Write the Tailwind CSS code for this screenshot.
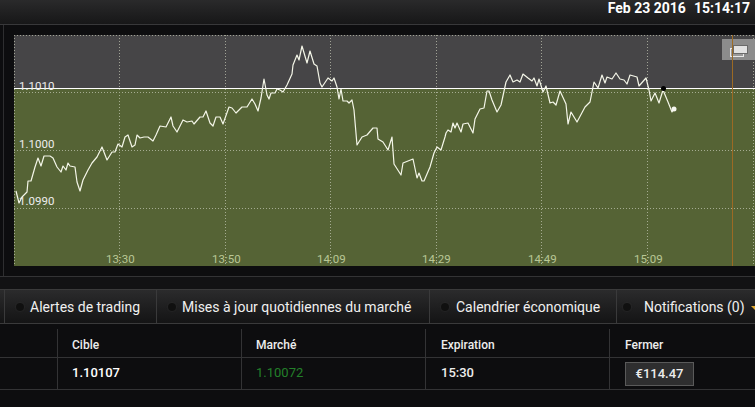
<!DOCTYPE html>
<html>
<head>
<meta charset="utf-8">
<script src="https://cdn.jsdelivr.net/npm/@tailwindcss/browser@4"></script>
</head>
<body class="bg-[#0c0c0e] font-['Roboto',sans-serif] overflow-hidden">
<div class="w-[755px] h-[407px] flex flex-col overflow-hidden bg-[#0d0d0f]">
  <header class="h-[25px] shrink-0 flex justify-end items-start gap-[8px] border-b border-[#38383a] bg-gradient-to-b from-[#2a2a2b] to-[#171718] pr-[5px] pt-px">
    <span class="text-white font-bold text-[14px] leading-[14px]">Feb 23 2016</span>
    <span class="text-white font-bold text-[14px] leading-[14px]">15:14:17</span>
  </header>
  <section class="h-[252px] shrink-0 pl-[14px] pt-[10px] border-b border-[#333335] relative">
    <div class="absolute left-[3px] top-0 bottom-0 w-px bg-[#2e2e30]"></div>
    <div class="relative w-[741px] h-[231px] overflow-hidden">
      <svg width="741" height="231" viewBox="14 35 741 231" class="absolute inset-0 block">
        <rect x="14" y="35" width="741" height="54" fill="#464547"/>
        <rect x="14" y="89" width="741" height="177" fill="#556335"/>
        <g stroke="#c8ccb8" stroke-width="1" stroke-dasharray="1 2" fill="none" opacity=".7">
          <path d="M14 35.5H755M14 92.5H755M14 150.5H755M14 208.5H755"/>
          <path d="M14.5 35V266M119.5 35V266M225.5 35V266M330.5 35V266M436.5 35V266M541.5 35V266M647.5 35V266M753.5 35V266"/>
        </g>
        <path d="M14 88.5H755" stroke="#ffffff" stroke-width="1.2" fill="none"/>
        <polyline fill="none" stroke="#f4f6e8" stroke-width="1.2" stroke-linejoin="round" points="16,191 19,203 22,197 27,192 28,181 31,181 35,167 38,158 41,166 44,156 50,156 53,158 57,167 61,172 63,166 66,170 68,163 70,166 75,167 77,182 80,191 83,180 88,170 92,163 97,157 102,147 107,160 112,152 115,152 118,144 122,147 125,137 128,135 132,147 135,145 137,135 140,138 144,137 148,137 153,141 156,135 160,126 166,127 171,117 173,126 177,132 183,120 187,122 192,121 194,124 200,117 203,117 206,111 210,123 213,126 216,117 220,117 223,124 229,107 232,108 236,113 242,107 247,107 252,99 255,104 258,111 261,98 264,79 267,95 269,99 271,93 275,93 277,89 280,90 283,92 287,85 292,74 293,65 297,55 299,60 302,46 307,63 310,51 314,64 317,66 320,83 322,87 328,78 332,81 334,78 337,87 339,99 341,89 343,101 347,101 349,103 352,100 354,110 357,145 362,137 367,135 373,128 377,128 378,139 383,142 388,150 392,137 394,164 401,175 403,163 413,159 417,178 419,173 422,181 424,181 430,167 434,153 437,147 441,150 445,137 446,133 448,130 451,132 453,123 455,128 457,123 461,132 463,124 468,123 473,133 475,119 480,109 484,108 487,91 489,91 492,100 497,112 501,105 506,82 510,75 513,82 517,80 520,82 523,74 528,78 532,81 534,78 537,86 539,79 543,92 546,86 550,103 553,102 556,105 560,91 566,104 568,124 571,112 577,122 585,107 590,102 594,82 598,88 602,75 605,83 607,77 612,79 616,73 620,79 624,80 627,84 630,75 637,77 639,86 646,78 649,90 651,101 655,93 659,103 663,90 668,102 672,112 674,109"/>
        <circle cx="663.5" cy="88.5" r="2.5" fill="#000"/>
        <circle cx="674" cy="109" r="2.5" fill="#f6f6f0"/>
      </svg>
      <div class="absolute left-[708px] top-[4px] w-[33px] h-[21px] bg-[#8c8c8c]"></div>
      <div class="absolute left-[716px] top-[13px] w-[14px] h-[9px] border border-[#e8e8e8] bg-[#9a9a9a]"></div>
      <div class="absolute left-[719px] top-[10px] w-[15px] h-[9px] bg-[#e2e2e2] border border-[#6a6a6a]"></div>
      <div class="absolute left-[718px] top-0 w-px h-[231px] bg-[#9c6a24]"></div>
      <span class="absolute left-[5px] top-[44px] text-[11.5px] leading-[14px] text-[#ededed]">1.1010</span>
      <span class="absolute left-[5px] top-[102px] text-[11.5px] leading-[14px] text-[#ededed]">1.1000</span>
      <span class="absolute left-[5px] top-[159px] text-[11.5px] leading-[14px] text-[#ededed]">1.0990</span>
      <span class="absolute left-[92px] top-[217px] text-[11.5px] leading-[14px] text-[#b9c795]">13:30</span>
      <span class="absolute left-[198px] top-[217px] text-[11.5px] leading-[14px] text-[#b9c795]">13:50</span>
      <span class="absolute left-[303px] top-[217px] text-[11.5px] leading-[14px] text-[#b9c795]">14:09</span>
      <span class="absolute left-[408px] top-[217px] text-[11.5px] leading-[14px] text-[#b9c795]">14:29</span>
      <span class="absolute left-[514px] top-[217px] text-[11.5px] leading-[14px] text-[#b9c795]">14:49</span>
      <span class="absolute left-[620px] top-[217px] text-[11.5px] leading-[14px] text-[#b9c795]">15:09</span>
    </div>
  </section>
  <div class="h-[12px] shrink-0 bg-[#121214]"></div>
  <nav class="h-[35px] shrink-0 flex items-center bg-gradient-to-b from-[#2b2b2c] to-[#141415] border-t border-b border-[#3a3a3b] text-[14px] leading-[16px] text-[#f0f0f0] whitespace-nowrap">
    <div class="w-[4px] h-full shrink-0"></div>
    <div class="w-[152px] h-full shrink-0 flex items-center border-l border-[#3a3a3b] pl-[11px]">
      <span class="w-[8px] h-[8px] rounded-full bg-[#101010] shadow-[0_0_2px_#333] mr-[6px]"></span><span>Alertes de trading</span>
    </div>
    <div class="w-[273px] h-full shrink-0 flex items-center border-l border-[#3a3a3b] pl-[11px]">
      <span class="w-[8px] h-[8px] rounded-full bg-[#101010] shadow-[0_0_2px_#333] mr-[6px]"></span><span>Mises à jour quotidiennes du marché</span>
    </div>
    <div class="w-[187px] h-full shrink-0 flex items-center border-l border-[#3a3a3b] pl-[11px]">
      <span class="w-[8px] h-[8px] rounded-full bg-[#101010] shadow-[0_0_2px_#333] mr-[7px]"></span><span>Calendrier économique</span>
    </div>
    <div class="flex-1 h-full flex items-center border-l border-[#3a3a3b] pl-[6px]">
      <span class="w-[8px] h-[8px] rounded-full bg-[#101010] shadow-[0_0_2px_#333] mr-[13px]"></span><span>Notifications (0)</span>
      <span class="ml-[6px] mt-[2px] shrink-0 w-0 h-0 border-l-[4px] border-r-[4px] border-t-[4px] border-l-transparent border-r-transparent border-t-[#e0a92f]"></span>
    </div>
  </nav>
  <div class="shrink-0 grid grid-cols-[57px_184px_184px_184px_146px] grid-rows-[35px_31px] -mt-px text-[12px] text-[#ededed] border-b border-[#333335]">
    <div class="border-b border-[#333335]"></div>
    <div class="mt-[6px] pt-[3px] border-l border-b border-[#333335] pl-[14px] flex items-center font-medium">Cible</div>
    <div class="mt-[6px] pt-[3px] border-l border-b border-[#333335] pl-[14px] flex items-center font-medium">Marché</div>
    <div class="mt-[6px] pt-[3px] border-l border-b border-[#333335] pl-[15px] flex items-center font-medium">Expiration</div>
    <div class="mt-[6px] pt-[3px] border-l border-b border-[#333335] pl-[15px] flex items-center font-medium">Fermer</div>
    <div></div>
    <div class="border-l border-[#333335] pl-[14px] pb-px flex items-center text-[13px] font-medium text-white">1.10107</div>
    <div class="border-l border-[#333335] pl-[14px] pb-px flex items-center text-[13px] text-[#23802a]">1.10072</div>
    <div class="border-l border-[#333335] pl-[15px] pb-px flex items-center text-[13px] font-medium">15:30</div>
    <div class="border-l border-[#333335] pl-[15px] flex items-center">
      <span class="w-[69px] h-[24px] flex items-center justify-center bg-[#2e2e2f] border border-[#5a5a5a] text-[13px] font-medium">€114.47</span>
    </div>
  </div>
</div>
</body>
</html>
